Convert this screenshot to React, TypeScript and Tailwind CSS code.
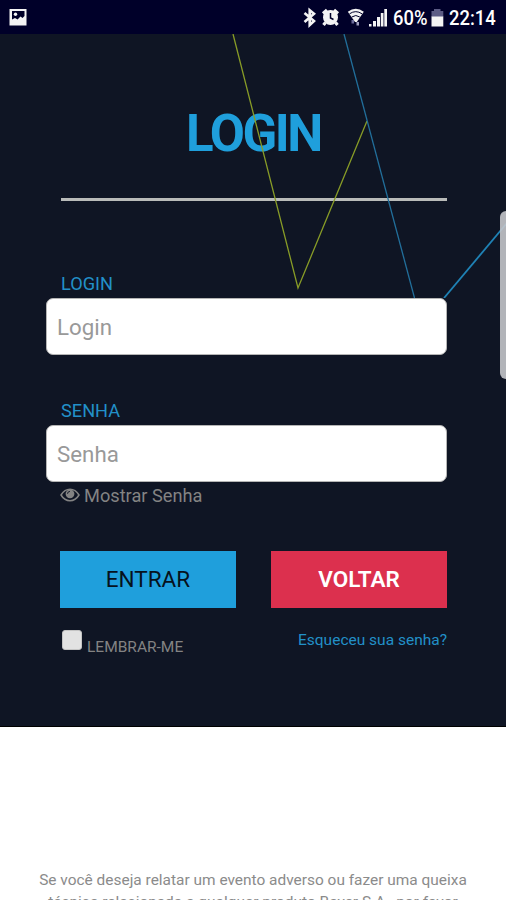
import type { ReactNode } from "react";

/* ────────── Status bar ────────── */
function StatusBar() {
    return (
        <header className="relative h-[34px] bg-[#000029] text-white">
            <svg className="block h-[34px] w-full" viewBox="0 0 506 34" fill="#f4f4f4">
                {/* picture notification */}
                <path fillRule="evenodd" d="M9.5 9h17v16.5h-17zM12 11v8.500l3-1.500 2.500 1.500 3-3 2 1.500 2-2V11z" />
                <circle cx="15.500" cy="14.300" r="1.700" />
                {/* bluetooth */}
                <path d="M304.500 13l9.500 8-4.300 4V10.200l4.300 3.500-9.500 8.300" fill="none" stroke="#f4f4f4" strokeWidth="2.600" />
                {/* alarm */}
                <circle cx="330.500" cy="17.500" r="7.500" />
                <path d="M323 13.500l4-3.500M338 13.500l-4-3.500M325.500 22.500l-2 2.500M335.500 22.500l2 2.500" stroke="#f4f4f4" strokeWidth="3.200" />
                <path d="M330.500 13v5l3 1.500" fill="none" stroke="#000029" strokeWidth="1.500" />
                {/* wifi */}
                <path d="M347.800 11.800Q355.800 5.800 363.800 11.800L356.800 22h-1.800z" />
                <path d="M349.500 13.800Q355.800 9.500 362 13.800M351.800 17Q355.800 14 359.800 17" fill="none" stroke="#000029" strokeWidth="1" />
                <path d="M351.500 20h2.500v3.500h-2.500z" fill="#6c6c9c" />
                <path d="M356.500 22h2.500v3.500h-2.500z" fill="#a0a0c0" />
                {/* signal */}
                <path d="M369 24h2.500v2.500H369zM373 21h3v5.500h-3zM377 17h3v9.500h-3zM380.800 13h2.700v13.500h-2.700zM384.300 9h2.700v17.500h-2.700z" />
                {/* battery */}
                <path d="M434 9h6.500v2h2.800v6H431.500v-6h2.500z" fill="#5c5c85" />
                <path d="M431.500 16.500h11.800v10h-11.800z" />
            </svg>
            <div className="absolute inset-0 text-[20px] font-medium leading-none">
                <span className="absolute left-[393px] top-2 origin-left scale-x-[0.92]">60%</span>
                <span className="absolute left-[449px] top-2 origin-left scale-x-[0.92]">22:14</span>
            </div>
        </header>
    );
}

/* ────────── Background lines ────────── */
function Lines() {
    return (
        <svg className="pointer-events-none absolute left-0 top-0 h-[264px] w-full" viewBox="0 34 506 264" fill="none" strokeWidth="1.300">
            <path d="M233 34L298 288L367 121" stroke="#889c27" />
            <path d="M344 34L414.500 298" stroke="#226f9b" />
            <path d="M444 298L507 223" stroke="#1f82b5" strokeWidth="1.800" />
        </svg>
    );
}

function EyeIcon() {
    return (
        <svg className="h-[14px] w-5" viewBox="0 0 20 14" fill="none" stroke="currentColor">
            <path d="M1 7Q4.500 1.200 10 1.200T19 7Q15.500 12.800 10 12.800T1 7z" strokeWidth="1.500" />
            <circle cx="10" cy="5.800" r="4.400" fill="currentColor" stroke="none" />
            <path d="M7.500 5.800Q7.500 3.400 10 3.400" stroke="#0f1524" strokeWidth="0.900" />
        </svg>
    );
}

function Field({ label, placeholder, type }: { label: string; placeholder: string; type: string }) {
    return (
        <label className="block">
            <span className="ml-[15px] block text-[18.200px] leading-5 text-[#2290c8]">{label}</span>
            <input
                type={type}
                placeholder={placeholder}
                className="mt-1 block h-[57px] w-full rounded-[7px] border border-[#b5b5b5] bg-white px-[10px] text-[22.300px] text-gray-700 placeholder:text-[#999]"
            />
        </label>
    );
}

function Button({ className, children }: { className: string; children: ReactNode }) {
    return (
        <button type="button" className={`h-[57px] w-44 ${className}`}>
            {children}
        </button>
    );
}

export default function App() {
    return (
        <div className="h-[900px] w-[506px] overflow-hidden bg-white font-[Roboto,sans-serif]">
            <StatusBar />
            <main className="relative h-[693px] border-b border-black bg-[#0f1524] pl-[46px] pr-[59px] pt-[70px]">
                <h1 className="ml-[14px] text-center text-[51px] font-bold leading-[60px] tracking-[-2.400px] text-[#1f9fdc]">
                    LOGIN
                </h1>
                <Lines />
                <hr className="ml-[15px] mt-[34px] h-[3px] border-0 bg-[#b9bbb9]" />

                <form className="relative">
                    <div className="pt-[73px]">
                        <Field label="LOGIN" placeholder="Login" type="text" />
                    </div>
                    <div className="pt-[46px]">
                        <Field label="SENHA" placeholder="Senha" type="password" />
                    </div>
                    <div className="ml-[14px] mt-[3px] flex h-5 items-center gap-1 text-[18.200px] leading-5 text-[#838383]">
                        <EyeIcon />
                        <span className="mt-px">Mostrar Senha</span>
                    </div>

                    <div className="ml-[14px] mt-[46px] flex justify-between">
                        <Button className="bg-[#1f9fdc] text-[22.500px] text-[#06121d]">ENTRAR</Button>
                        <Button className="bg-[#dc304e] text-[22.500px] font-semibold text-white">VOLTAR</Button>
                    </div>

                    <div className="ml-4 mt-[22px] flex items-start justify-between text-[15.500px] leading-5">
                        <label className="flex items-start gap-[5px] text-[#838383]">
                            <input
                                type="checkbox"
                                className="h-5 w-5 appearance-none rounded-[3px] border border-[#c4c4c4] bg-[#e2e2e2]"
                            />
                            <span className="mt-[7px]">LEMBRAR-ME</span>
                        </label>
                        <a href="#" className="text-[#2290c8]">Esqueceu sua senha?</a>
                    </div>
                </form>
            </main>
            <footer className="pt-[142px] text-center text-[15.450px] leading-[22px] text-[#8b8b8b]">
                <p className="whitespace-nowrap">
                    Se você deseja relatar um evento adverso ou fazer uma queixa
                    <br />
                    técnica relacionada a qualquer produto Bayer S.A., por favor
                </p>
            </footer>
            {/* scroll handle */}
            <div className="absolute left-[500px] top-[211px] h-[168px] w-1.5 rounded-l-[6px] bg-[#c4c5ca]/90" />
        </div>
    );
}
